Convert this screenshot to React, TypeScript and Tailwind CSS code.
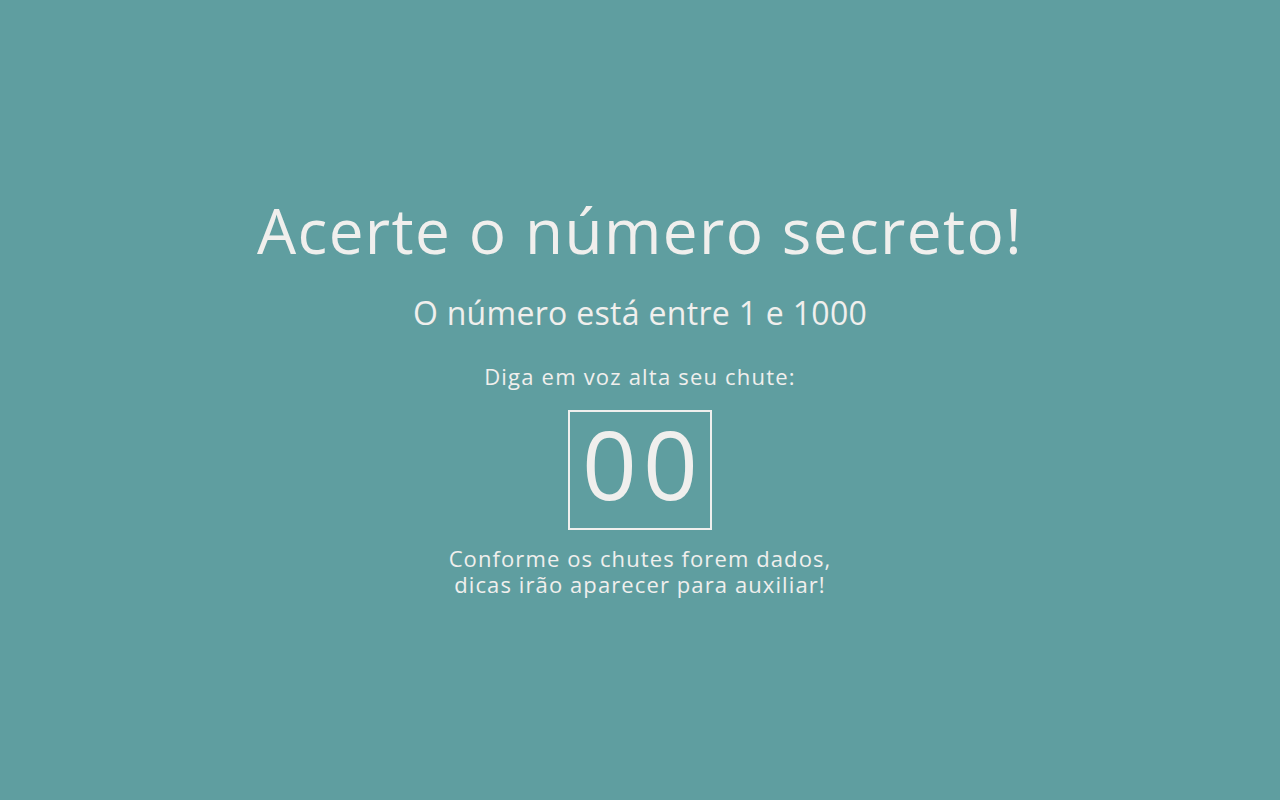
import React from "react";

export default function App() {
  return (
    <main
      className="h-screen w-full bg-[#5f9ea0] text-[#f0efed] flex flex-col items-center justify-center text-center pb-[5px]"
      style={{ fontFamily: '"Open Sans", "Noto Sans", sans-serif' }}
    >
      <h1 className="text-[62px] leading-none tracking-[1.4px]">Acerte o número secreto!</h1>
      <h2 className="text-[32px] leading-none tracking-[0.3px] mt-[36px]">O número está entre 1 e 1000</h2>
      <p className="text-[22px] leading-none tracking-[1.2px] mt-[36px]">Diga em voz alta seu chute:</p>
      <div className="mt-[23px] w-[144px] h-[120px] border-2 border-[#f0efed] flex items-center justify-center pb-[14px] pl-[6px]">
        <span className="text-[96px] leading-none tracking-[6px]">00</span>
      </div>
      <p className="text-[22px] leading-[26px] tracking-[1.1px] mt-[15px]">
        Conforme os chutes forem dados,
        <br />
        dicas irão aparecer para auxiliar!
      </p>
    </main>
  );
}
